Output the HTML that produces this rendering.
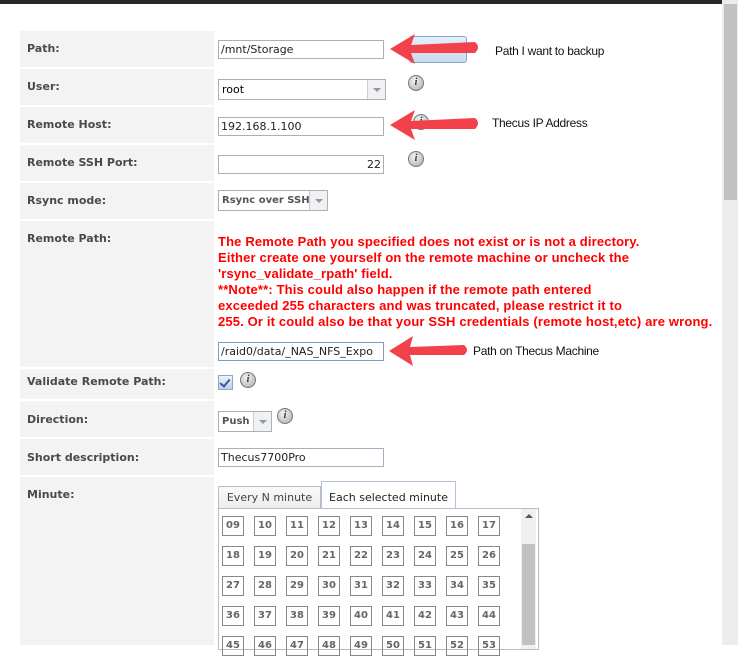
<!DOCTYPE html>
<html><head><meta charset="utf-8"><style>
body{margin:0;width:738px;height:645px;overflow:hidden;background:#fff;position:relative;font-family:"DejaVu Sans",Verdana,sans-serif}
.top{position:absolute;left:0;top:0;width:722px;height:4px;background:#262626}
.sb{position:absolute;left:722px;top:0;width:16px;height:645px;background:#ececec}
.sbt{position:absolute;left:724px;top:4px;width:13px;height:196px;background:#c1c1c1}
.lab{position:absolute;left:20px;width:194px;background:#f3f3f3;font-weight:bold;font-size:11px;color:#4a4a4a}
.lab span{position:absolute;left:7px}
.in{position:absolute;left:218px;width:162px;height:17px;border:1px solid #a9b0bd;background:#fff;font-size:11px;color:#222;line-height:17px;padding-left:2px;box-sizing:content-box;white-space:nowrap;overflow:hidden}
.sel{position:absolute;border:1px solid #a9b0bd;background:#fff;font-size:11px;height:19px;line-height:19px}
.dd{position:absolute;right:0;top:0;width:17px;height:19px;border-left:1px solid #c8cdd6;background:#f1f1f1}
.dd:after{content:"";position:absolute;left:5px;top:8px;border-left:4px solid transparent;border-right:4px solid transparent;border-top:4px solid #8a9ab3}
.info{position:absolute;width:14px;height:14px;border-radius:50%;background:radial-gradient(circle at 40% 35%,#f4f4f4,#a8a8a8);border:1px solid #777;font:italic bold 10px "Liberation Serif",serif;color:#333;text-align:center;line-height:14px}
.red{position:absolute;left:218px;top:234px;font:bold 13px/16px "Liberation Sans",Arial,sans-serif;color:#f00;letter-spacing:0.15px;white-space:nowrap}
.ann{position:absolute;font:12px "Liberation Sans",Arial,sans-serif;color:#111;letter-spacing:-0.3px}
.arrow{position:absolute}
.btn{position:absolute;left:409px;top:36px;width:56px;height:25px;border:1px solid #8aa6c8;border-radius:3px;background:linear-gradient(#e4eefa,#c9dbf0)}
.m{position:absolute;width:20px;height:18px;border:1px solid #888;font:bold 10px "DejaVu Sans",sans-serif;color:#666;text-align:center;line-height:18px}
</style></head><body>
<div class="top"></div>
<div class="sb"></div><div class="sbt"></div>

<div class="lab" style="top:31px;height:36px"><span style="top:11px">Path:</span></div>
<div class="lab" style="top:69px;height:36px"><span style="top:11px">User:</span></div>
<div class="lab" style="top:107px;height:36px"><span style="top:11px">Remote Host:</span></div>
<div class="lab" style="top:145px;height:36px"><span style="top:11px">Remote SSH Port:</span></div>
<div class="lab" style="top:183px;height:36px"><span style="top:11px">Rsync mode:</span></div>
<div class="lab" style="top:221px;height:146px"><span style="top:11px">Remote Path:</span></div>
<div class="lab" style="top:369px;height:30px"><span style="top:6px">Validate Remote Path:</span></div>
<div class="lab" style="top:401px;height:36px"><span style="top:12px">Direction:</span></div>
<div class="lab" style="top:439px;height:36px"><span style="top:12px">Short description:</span></div>
<div class="lab" style="top:477px;height:168px"><span style="top:11px">Minute:</span></div>

<div class="btn"></div>
<div class="in" style="top:40px">/mnt/Storage</div>
<div class="sel" style="left:218px;top:79px;width:166px"><span style="padding-left:3px">root</span><div class="dd"></div></div>
<div class="info" style="left:408px;top:75px">i</div>
<div class="info" style="left:413px;top:114px">i</div>
<div class="in" style="top:117px">192.168.1.100</div>
<div class="in" style="top:155px;text-align:right;padding-right:2px;padding-left:0;width:162px">22</div>
<div class="info" style="left:408px;top:151px">i</div>
<div class="sel" style="left:218px;top:190px;width:108px;font-weight:bold;font-size:10px;color:#555"><span style="padding-left:3px">Rsync over SSH</span><div class="dd"></div></div>

<div class="red">The Remote Path you specified does not exist or is not a directory.<br>Either create one yourself on the remote machine or uncheck the<br>'rsync_validate_rpath' field.<br>**Note**: This could also happen if the remote path entered<br>exceeded 255 characters and was truncated, please restrict it to<br>255. Or it could also be that your SSH credentials (remote host,etc) are wrong.</div>
<div class="in" style="top:342px;border-color:#7a9cc8">/raid0/data/_NAS_NFS_Expo</div>

<div style="position:absolute;left:218px;top:375px;width:13px;height:13px;border:1px solid #8fa6c4;background:linear-gradient(#eaf2fb,#bcd2ec)"><div style="position:absolute;left:3px;top:1px;width:4px;height:8px;border-right:2px solid #3a5a8a;border-bottom:2px solid #3a5a8a;transform:rotate(40deg)"></div></div>
<div class="info" style="left:240px;top:372px">i</div>
<div class="sel" style="left:218px;top:411px;width:52px;font-weight:bold;font-size:10px;color:#555"><span style="padding-left:3px">Push</span><div class="dd"></div></div>
<div class="info" style="left:277px;top:408px">i</div>
<div class="in" style="top:448px">Thecus7700Pro</div>

<div style="position:absolute;left:218px;top:486px;width:101px;height:22px;border:1px solid #b8bcc4;border-bottom:none;background:linear-gradient(#fafafa,#ececec);font-size:11px;color:#444;line-height:21px;text-align:center">Every N minute</div>
<div style="position:absolute;left:321px;top:481px;width:133px;height:27px;border:1px solid #b3c3d8;border-bottom:none;background:#fff;font-size:11px;color:#222;line-height:31px;text-align:center">Each selected minute</div>
<div style="position:absolute;left:218px;top:508px;width:319px;height:140px;border:1px solid #b8bcc4;background:#fff"></div>
<div style="position:absolute;left:521px;top:509px;width:15px;height:140px;background:#f0f0f0"></div>
<div style="position:absolute;left:522px;top:544px;width:13px;height:101px;background:#c1c1c1"></div>
<div style="position:absolute;left:525px;top:514px;border-left:4px solid transparent;border-right:4px solid transparent;border-bottom:4px solid #555"></div>
<div id="g"></div>
<script>
var h='';for(var r=0;r<5;r++)for(var c=0;c<9;c++){var n=9+r*9+c;h+='<div class="m" style="left:'+(222+c*32)+'px;top:'+(516+r*30)+'px">'+(n<10?'0'+n:n)+'</div>';}
document.getElementById('g').innerHTML=h;
</script>

<svg class="arrow" style="left:385px;top:30px" width="100" height="40"><path d="M5 19 L30 4 L26 15 L90 12 Q96 17 90 23 L26 23 L30 34 Z" fill="#f2414a"/></svg>
<svg class="arrow" style="left:385px;top:106px" width="100" height="40"><path d="M5 19 L30 4 L26 15 L90 12 Q96 17 90 23 L26 23 L30 34 Z" fill="#f2414a"/></svg>
<svg class="arrow" style="left:384px;top:331px" width="100" height="40"><path d="M5 20 L29 5 L26 16 L80 14 Q86 19 80 24 L26 24 L29 35 Z" fill="#f2414a"/></svg>
<div class="ann" style="left:495px;top:44px">Path I want to backup</div>
<div class="ann" style="left:492px;top:116px">Thecus IP Address</div>
<div class="ann" style="left:473px;top:344px">Path on Thecus Machine</div>
</body></html>
